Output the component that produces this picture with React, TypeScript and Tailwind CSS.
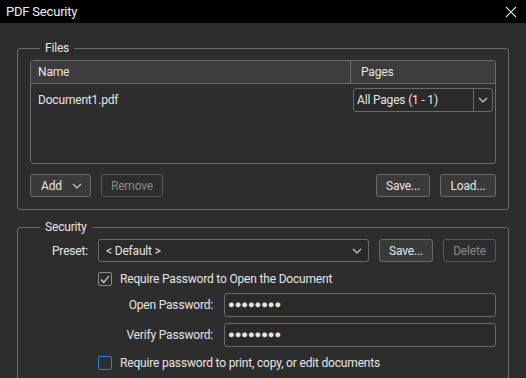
import React from "react";

function Chevron({ className = "" }: { className?: string }) {
  return (
    <svg width="10" height="6" viewBox="0 0 10 6" className={className}>
      <path d="M1 1 L5 5 L9 1" fill="none" stroke="#d0d0d0" strokeWidth="1.1" />
    </svg>
  );
}

function Btn({ label, disabled, className = "" }: { label: string; disabled?: boolean; className?: string }) {
  return (
    <button
      className={`h-[23px] rounded-[3px] border text-[12px] ${
        disabled
          ? "border-[#5a5a5a] bg-[#2d2d2d] text-[#8a8a8a]"
          : "border-[#6a6a6a] bg-[#3a3a3a] text-[#e6e6e6]"
      } ${className}`}
    >
      {label}
    </button>
  );
}

function Check({ checked, focus }: { checked?: boolean; focus?: boolean }) {
  return (
    <span
      className={`flex h-[14px] w-[14px] items-center justify-center rounded-[2px] border ${
        focus ? "border-[#2f7fd4]" : "border-[#8a8a8a]"
      } bg-[#2d2d2d]`}
    >
      {checked && (
        <svg width="10" height="9" viewBox="0 0 10 9">
          <path d="M1 4.5 L3.8 7.5 L9 1" fill="none" stroke="#e0e0e0" strokeWidth="1.2" />
        </svg>
      )}
    </span>
  );
}

export default function App() {
  return (
    <div
      className="flex h-[378px] w-[526px] flex-col overflow-hidden bg-[#2d2d2d] text-[12px] tracking-[-0.18px] text-[#e6e6e6]"
      style={{ fontFamily: "Roboto, 'Noto Sans', sans-serif" }}
    >
      {/* title bar */}
      <div className="flex h-[23px] shrink-0 items-center justify-between bg-black pl-[6px] pr-[9px]">
        <span className="text-[13px] tracking-[-0.2px] text-[#f0f0f0]">PDF Security</span>
        <svg width="12" height="12" viewBox="0 0 12 12">
          <path d="M1 1 L11 11 M11 1 L1 11" stroke="#e0e0e0" strokeWidth="1.1" />
        </svg>
      </div>

      <div className="flex flex-col px-[17px] pt-[17px]">
        {/* Files */}
        <fieldset className="rounded-[3px] border border-[#6a6a6a] px-3 pb-3 pt-1">
          <legend className="ml-[10px] px-[5px] leading-[16px]">Files</legend>
          <div className="flex h-[104px] flex-col overflow-hidden rounded-[3px] border border-[#6a6a6a]">
            <div className="flex h-[23px] shrink-0 border-b border-[#6a6a6a] bg-[#3c3c3c]">
              <div className="flex flex-1 items-center pl-[7px]">Name</div>
              <div className="flex w-[145px] items-center border-l border-[#6a6a6a] pl-[10px]">Pages</div>
            </div>
            <div className="flex h-[32px] items-center">
              <div className="flex-1 pl-[7px]">Document1.pdf</div>
              <div className="mr-[2px] flex h-[24px] w-[140px] items-center rounded-[3px] border border-[#6a6a6a] bg-[#2a2a2a]">
                <span className="flex-1 pl-[3px]">All Pages (1 - 1)</span>
                <span className="flex h-full w-[19px] items-center justify-center border-l border-[#6a6a6a]">
                  <Chevron />
                </span>
              </div>
            </div>
          </div>
          <div className="mt-[10px] flex items-center">
            <button className="flex h-[23px] w-[61px] items-center justify-between rounded-[3px] border border-[#6a6a6a] bg-[#3a3a3a] pl-[10px] pr-[8px]">
              <span>Add</span>
              <Chevron />
            </button>
            <Btn label="Remove" disabled className="ml-[10px] w-[62px]" />
            <div className="flex-1" />
            <Btn label="Save..." className="w-[54px]" />
            <Btn label="Load..." className="ml-[10px] w-[56px]" />
          </div>
        </fieldset>

        {/* Security */}
        <fieldset className="mt-[9px] rounded-[3px] border border-[#6a6a6a] px-3 pb-3 pt-1">
          <legend className="ml-[10px] px-[5px] leading-[16px]">Security</legend>
          <div className="flex h-[23px] items-center">
            <span className="w-[58px] text-right">Preset:</span>
            <div className="ml-[10px] flex h-[23px] w-[271px] items-center justify-between rounded-[3px] border border-[#6a6a6a] bg-[#2a2a2a] pl-[7px] pr-[6px]">
              <span>&lt; Default &gt;</span>
              <Chevron />
            </div>
            <Btn label="Save..." className="ml-[10px] w-[54px]" />
            <Btn label="Delete" disabled className="ml-[10px] w-[53px]" />
          </div>
          <div className="ml-[68px] mt-[7px] flex h-[20px] items-center gap-[8px]">
            <Check checked />
            <span>Require Password to Open the Document</span>
          </div>
          <div className="mt-[4px] flex h-[24px] items-center">
            <span className="w-[183px] text-right">Open Password:</span>
            <div className="ml-[11px] flex h-[24px] flex-1 items-center rounded-[3px] border border-[#6a6a6a] bg-[#2a2a2a] pl-[3px] text-[11px] tracking-[0px]">
              ●●●●●●●●
            </div>
          </div>
          <div className="mt-[6px] flex h-[24px] items-center">
            <span className="w-[183px] text-right">Verify Password:</span>
            <div className="ml-[11px] flex h-[24px] flex-1 items-center rounded-[3px] border border-[#6a6a6a] bg-[#2a2a2a] pl-[3px] text-[11px] tracking-[0px]">
              ●●●●●●●●
            </div>
          </div>
          <div className="ml-[68px] mt-[6px] flex h-[20px] items-center gap-[8px]">
            <Check focus />
            <span>Require password to print, copy, or edit documents</span>
          </div>
        </fieldset>
      </div>
    </div>
  );
}
